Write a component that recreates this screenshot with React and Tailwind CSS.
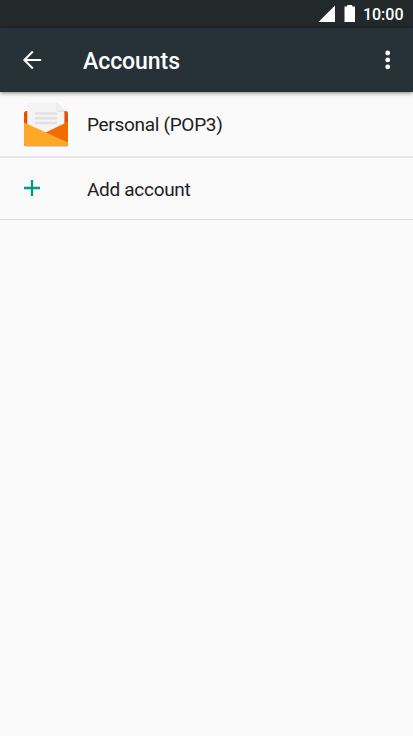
import React from "react";

const StatusBar = () => {
  return (
    <div className="flex h-7 items-start justify-end bg-[#23282b] pr-[9.5px] text-white">
      <svg className="mt-[5px] h-[18px] w-[18px]" viewBox="0 0 18 18" fill="currentColor">
        <path d="M17 .6V17H.5z" />
      </svg>
      <svg className="ml-2 mt-[5px] h-[18px] w-3" viewBox="0 0 12 18" fill="currentColor">
        <path d="M3.2 0h5v1.6H11V17H.5V1.6h2.7z" />
      </svg>
      <span className="ml-[7px] mt-[5px] text-[16px] leading-5 font-medium whitespace-nowrap">10:00</span>
    </div>
  );
};

const Header = () => {
  return (
    <header className="relative flex h-16 items-center bg-[#263238] text-white shadow-[0_1px_4px_rgba(0,0,0,0.5)]">
      <button className="ml-[22px] h-5 w-5" aria-label="Back">
        <svg className="h-5 w-5" viewBox="0 0 20 20" fill="none" stroke="currentColor" strokeWidth="2.1">
          <path d="M19.2 10H2.5M10.8 1.6 2.4 10l8.4 8.4" />
        </svg>
      </button>
      <h1 className="ml-[41px] mt-1 text-[23px] leading-7 font-medium tracking-[-0.05px] whitespace-nowrap">Accounts</h1>
      <button className="ml-auto mr-[22px] h-5 w-[7px]" aria-label="More options">
        <svg className="h-5 w-[7px]" viewBox="0 0 7 20" fill="currentColor">
          <circle cx="3.7" cy="3" r="2.4" />
          <circle cx="3.7" cy="9.9" r="2.4" />
          <circle cx="3.7" cy="16.8" r="2.4" />
        </svg>
      </button>
    </header>
  );
};

const MailIcon = () => {
  return (
    <svg className="h-[50px] w-12" viewBox="0 0 48 50">
      {/* soft shadow under the envelope */}
      <rect x="2" y="12" width="44" height="35" rx="2.4" fill="#d2d2d2" />
      <rect x="2" y="11" width="44" height="35" rx="2.6" fill="#e65100" />
      {/* letter */}
      <path d="M5.3 3.8q0-1.3 1.3-1.3h28.2l7.6 8V34H5.3z" fill="#f4f4f4" />
      <path d="M35.5 10.5h6.9v1.3h-6z" fill="#dcdcdc" />
      <path d="M34.8 2.5v6.7q0 1.3 1.3 1.3h6.3z" fill="#efefef" stroke="#e2e2e2" strokeWidth=".5" />
      <path d="M13 13.5h22M13 18.3h22M13 23h22" stroke="#e0e0e0" strokeWidth="2.4" />
      {/* flaps */}
      <path d="M46 21.8v21.6q0 2.6-2.4 2.6H10l13.5-13.6z" fill="#ef6c00" />
      <path d="M2 22.4 46 42.4v1.2q0 2.4-2.4 2.4H4.6Q2 46 2 43.6z" fill="#ffa726" />
    </svg>
  );
};

const AddIcon = () => {
  return (
    <svg className="h-[18px] w-[18px]" viewBox="0 0 18 18" stroke="#009688" strokeWidth="2.3">
      <path d="M9 1v16M1 9h16" />
    </svg>
  );
};

const App = () => {
  return (
    <div className="min-h-screen bg-[#fafafa] font-['Roboto',sans-serif]">
      <StatusBar />
      <Header />
      <ul className="text-[19px] leading-6 tracking-[-0.3px] text-[#212121]">
        <li className="flex h-[66px] items-start border-b-2 border-[#e7e7e7]">
          <div className="ml-[22px] mt-2 w-[65px]">
            <MailIcon />
          </div>
          <span className="mt-[21px] whitespace-nowrap">Personal (POP3)</span>
        </li>
        <li className="flex h-[62px] items-start border-b border-[#dcdcdc]">
          <div className="ml-[23px] mt-[21px] w-16">
            <AddIcon />
          </div>
          <span className="mt-5 whitespace-nowrap">Add account</span>
        </li>
      </ul>
    </div>
  );
};

export default App;
